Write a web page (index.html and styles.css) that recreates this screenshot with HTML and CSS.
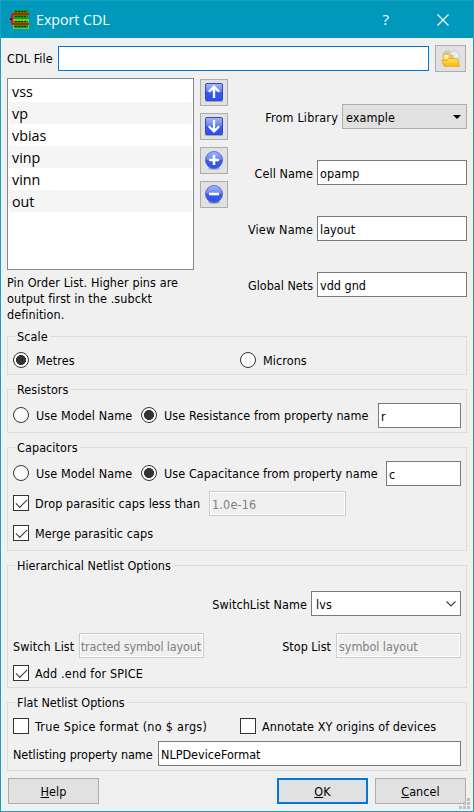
FILE: index.html
```html
<!DOCTYPE html>
<html lang="en">
<head>
<meta charset="utf-8">
<title>Export CDL</title>
<link rel="stylesheet" href="styles.css">
</head>
<body>
<svg class="defs" width="0" height="0">
  <defs>
    <linearGradient id="blue" x1="0" y1="0" x2="0" y2="1"><stop offset="0" stop-color="#a9b8fb"/><stop offset=".48" stop-color="#6580f5"/><stop offset=".52" stop-color="#3a5cf0"/><stop offset="1" stop-color="#2c50f0"/></linearGradient>
    <linearGradient id="folder" x1="0" y1="0" x2="0" y2="1"><stop offset="0" stop-color="#ffe36a"/><stop offset="1" stop-color="#fbb80c"/></linearGradient>
  </defs>
</svg>
<div class="window">
  <header class="titlebar">
    <svg class="logo" width="20" height="21" viewBox="0 0 20 21" shape-rendering="crispEdges">
      <path fill="#0aa00a" d="M4 1h14v9H4zM4 11h14v8H4z"/>
      <path fill="#5fd03c" d="M3 10h16v2H3zM3 19h16v1H3zM18 10h1v10h-1zM3 16h1v4H3z"/>
      <path stroke="#043c04" stroke-width="1" stroke-dasharray="2 1" d="M5 2.500h12M5 7.500h12M5 12.500h12M5 17.500h12"/>
      <path fill="#f00" d="M2 4h17v2H3v8h16v2H2v-1H1V5h1z"/>
      <path fill="#700" d="M0 9h2v2H0z"/>
    </svg>
    <span class="title">Export CDL</span>
    <span class="help">?</span>
    <svg class="close" width="12" height="12" viewBox="0 0 12 12"><path d="M.5.5l11 11M11.5.5l-11 11" stroke="#fff" stroke-width="1.15"/></svg>
  </header>
  <main class="content">
    <div class="file-row">
      <label class="t-file">CDL File</label>
      <div class="field focus"></div>
      <button class="tool browse"><svg width="20" height="18" viewBox="0 0 20 18"><path fill="#e8ecf5" stroke="#bcc4d4" stroke-width=".7" d="M10 1h6l2 3v11h-8z"/><path fill="#c9c9c9" d="M3 2c2-2 5-2 6-1v2H3z"/><path fill="#f5c65a" stroke="#e8a844" stroke-width=".6" d="M2 3.500h6l1 2h3v9H2z"/><path fill="#fff0b0" d="M3.500 5h4v4h-4z"/><path fill="url(#folder)" stroke="#f0a010" stroke-width=".8" d="M.6 10.500h5l2-2h9l1.700 7.800H3.400z"/></svg></button>
    </div>
    <div class="top">
      <div class="pins">
        <ul class="list"><li>vss</li><li>vp</li><li>vbias</li><li>vinp</li><li>vinn</li><li>out</li></ul>
        <p class="note">Pin Order List. Higher pins are<br>output first in the .subckt<br>definition.</p>
      </div>
      <div class="tools">
        <button class="tool"><svg width="18" height="19" viewBox="0 0 18 19"><rect x="0" y="17" width="18" height="2" rx="1" fill="#a8a8b4"/><rect x=".5" y=".5" width="17" height="17" rx="1.500" fill="url(#blue)" stroke="#3349b5"/><path d="M9 15V4M3.800 8.800L9 3.600l5.200 5.200" fill="none" stroke="#fff" stroke-width="2.300"/></svg></button>
        <button class="tool"><svg width="18" height="19" viewBox="0 0 18 19"><rect x="0" y="17" width="18" height="2" rx="1" fill="#a8a8b4"/><rect x=".5" y=".5" width="17" height="17" rx="1.500" fill="url(#blue)" stroke="#3349b5"/><path d="M9 3v11M3.800 9.200L9 14.400l5.200-5.200" fill="none" stroke="#fff" stroke-width="2.300"/></svg></button>
        <button class="tool"><svg width="18" height="19" viewBox="0 0 18 19"><ellipse cx="9" cy="17" rx="6" ry="1.800" fill="#a8a8b4"/><circle cx="9" cy="9" r="8.500" fill="url(#blue)" stroke="#4058c8" stroke-width=".8"/><path d="M9 4v10M4 9h10" stroke="#fff" stroke-width="2.600"/></svg></button>
        <button class="tool"><svg width="18" height="19" viewBox="0 0 18 19"><ellipse cx="9" cy="17" rx="6" ry="1.800" fill="#a8a8b4"/><circle cx="9" cy="9" r="8.500" fill="url(#blue)" stroke="#4058c8" stroke-width=".8"/><path d="M4 9h10" stroke="#fff" stroke-width="2.600"/></svg></button>
      </div>
      <div class="form">
        <div class="form-row"><label class="wide">From Library</label><div class="combo gray"><span>example</span><svg width="8" height="4" viewBox="0 0 8 4"><path d="M0 0h8L4 4z"/></svg></div></div>
        <div class="form-row"><label>Cell Name</label><div class="field">opamp</div></div>
        <div class="form-row"><label class="wide">View Name</label><div class="field tight">layout</div></div>
        <div class="form-row"><label class="tight">Global Nets</label><div class="field tight">vdd gnd</div></div>
      </div>
    </div>
    <fieldset class="scale">
      <legend>Scale</legend>
      <div class="row half"><div class="option"><i class="radio on"></i><span>Metres</span></div><div class="option"><i class="radio"></i><span>Microns</span></div></div>
    </fieldset>
    <fieldset class="resistors">
      <legend>Resistors</legend>
      <div class="row tall"><div class="option model"><i class="radio"></i><span>Use Model Name</span></div><div class="option"><i class="radio on"></i><span>Use Resistance from property name</span></div><div class="field r">r</div></div>
    </fieldset>
    <fieldset class="capacitors">
      <legend>Capacitors</legend>
      <div class="row tall"><div class="option model"><i class="radio"></i><span>Use Model Name</span></div><div class="option"><i class="radio on"></i><span>Use Capacitance from property name</span></div><div class="field c">c</div></div>
      <div class="row tall drop"><div class="option check"><i class="box on"></i><span>Drop parasitic caps less than</span></div><div class="field disabled wide">1.0e-16</div></div>
      <div class="row merge"><div class="option check"><i class="box on"></i><span>Merge parasitic caps</span></div></div>
    </fieldset>
    <fieldset class="hier">
      <legend class="tight">Hierarchical Netlist Options</legend>
      <div class="row tall right"><label>SwitchList Name</label><div class="combo"><span>lvs</span><svg width="10" height="6" viewBox="0 0 10 6"><path d="M.5.5L5 5 9.500.5" fill="none" stroke="#444" stroke-width="1.200"/></svg></div></div>
      <div class="row tall lists"><label>Switch List</label><div class="field disabled clip">tracted symbol layout</div><label class="stop tight">Stop List</label><div class="field disabled tighter">symbol layout</div></div>
      <div class="row end"><div class="option check"><i class="box on"></i><span class="wide">Add .end for SPICE</span></div></div>
    </fieldset>
    <fieldset class="flat">
      <legend class="tight">Flat Netlist Options</legend>
      <div class="row half"><div class="option check"><i class="box"></i><span class="wider">True Spice format (no $ args)</span></div><div class="option check"><i class="box"></i><span>Annotate XY origins of devices</span></div></div>
      <div class="row tall prop"><label class="tighter">Netlisting property name</label><div class="field tight">NLPDeviceFormat</div></div>
    </fieldset>
    <footer class="actions">
      <button class="push"><span><u>H</u>elp</span></button>
      <button class="push default"><span><u>O</u>K</span></button>
      <button class="push"><span><u>C</u>ancel</span></button>
    </footer>
  </main>
  <svg class="grip" width="11" height="11" viewBox="0 0 11 11" fill="#bfbfbf"><path d="M8 0h3v3H8zM4 4h3v3H4zM8 4h3v3H8zM0 8h3v3H0zM4 8h3v3H4zM8 8h3v3H8z"/></svg>
</div>
</body>
</html>
```
FILE: styles.css
```css
* { box-sizing: border-box; }
body { margin: 0; font: 12.5px/16px "DejaVu Sans Condensed", "DejaVu Sans", sans-serif; font-stretch: condensed; letter-spacing: .08px; color: #000; }
.tighter { letter-spacing: -.05px; }
.tight { letter-spacing: 0; }
.wide { letter-spacing: .18px; }
.wider { letter-spacing: .29px; }
.defs { position: absolute; }
svg { display: block; flex: none; }
.window { position: relative; width: 474px; height: 812px; background: #f0f0f0; border: 1px solid #18a0c0; display: flex; flex-direction: column; overflow: hidden; }
.titlebar { height: 37px; flex: none; background: #0099bc; color: #fff; display: flex; align-items: center; padding: 0 24px 0 9px; font-family: "Open Sans", sans-serif; font-stretch: normal; }
.title { font-size: 14.2px; margin-left: 6px; letter-spacing: 0; }
.help { font-size: 15px; margin-left: auto; margin-right: 48px; position: relative; top: -1px; }
.content { padding: 7px 6px 0; display: flex; flex-direction: column; white-space: nowrap; }
.file-row { display: flex; align-items: center; height: 27px; }
.file-row label { width: 51px; padding-top: 1px; }
.field { height: 25px; background: #fff; border: 1px solid #7a7a7a; padding: 5px 2px 0; line-height: 16px; }
.file-row .field { width: 371px; margin-right: 6px; }
.field.focus { border-color: #0078d7; }
.field.disabled { background: #f0f0f0; border-color: #ccc; box-shadow: inset 0 0 0 1px #fff; color: #808080; }
button { font: inherit; letter-spacing: inherit; color: inherit; border: 1px solid #adadad; background: #e1e1e1; padding: 0; display: flex; align-items: center; justify-content: center; }
.tool { width: 28px; height: 27px; }
.browse { width: 31px; }
.top { display: flex; height: 251px; margin-top: 6px; }
.pins { width: 187px; margin-right: 6px; }
.list { margin: 0; list-style: none; height: 192px; border: 1px solid #828790; background: #fff; padding: 1px; font: 14.3px/22px "Open Sans", sans-serif; font-stretch: normal; letter-spacing: 0; }
.list li { height: 22px; padding: 1px 0 0 3px; }
.list li:nth-child(even) { background: #f5f5f5; }
.note { margin: 5px 0 0; line-height: 16px; }
.tools { display: flex; flex-direction: column; gap: 7px; padding-top: 1px; }
.form { flex: 1; display: flex; flex-direction: column; gap: 31px; padding-top: 26px; }
.form-row { display: flex; justify-content: flex-end; gap: 4px; height: 25px; }
.form-row label { padding-top: 6px; }
.form-row .field { width: 150px; }
.combo { width: 150px; height: 25px; border: 1px solid #7a7a7a; background: #fff; display: flex; align-items: center; justify-content: space-between; padding: 2px 4px 0; }
.combo.gray { width: 125px; background: #e1e1e1; border-color: #adadad; padding: 2px 5px 0 3px; }
.combo svg { position: relative; top: -1px; }
fieldset { margin: 0 0 7px; padding: 0 5px; border: 1px solid #dcdcdc; min-width: 0; }
legend { height: 15px; line-height: 15px; padding: 0 2px; margin-left: 2px; }
.scale { height: 46px; }
.resistors { height: 51px; }
.capacitors { height: 111px; }
.hier { height: 130px; }
.flat { height: 76px; }
.row { display: flex; }
.option { display: flex; height: 16px; gap: 7px; }
.option span { padding-top: 1px; }
.check { gap: 6px; }
.half { padding-top: 8px; }
.half .option { width: 227px; flex: none; }
.half .option:last-child { width: 221px; }
.tall { height: 25px; }
.tall .option { margin-top: 4px; }
.tall label { padding-top: 6px; }
.resistors .tall, .capacitors .tall:nth-child(2) { margin-top: 6px; }
.model { width: 128px; flex: none; }
.field.r { width: 83px; margin-left: auto; }
.field.c { width: 75px; margin-left: auto; }
.capacitors .drop { margin-top: 5px; }
.drop .check { width: 196px; }
.drop .field { width: 137px; }
.merge { margin-top: 9px; }
.right { justify-content: flex-end; margin-top: 18px; gap: 4px; }
.lists { margin-top: 17px; }
.lists label:first-child { width: 66px; }
.lists .field { width: 125px; }
.lists .clip { overflow: hidden; display: flex; justify-content: flex-end; padding-left: 0; padding-right: 2px; letter-spacing: -.15px; }
.lists .stop { margin-left: auto; margin-right: 5px; }
.end { margin-top: 7px; }
.prop { margin-top: 7px; }
.prop label { width: 145px; }
.prop .field { width: 303px; }
.radio, .box { width: 16px; height: 16px; border: 1px solid #333; background: #fff; flex: none; }
.radio { border-radius: 50%; }
.radio.on { background: radial-gradient(circle, #333 4.700px, #fff 5.300px); }
.box.on::after { content: ""; display: block; width: 10px; height: 5px; margin: 3px 0 0 2px; border: solid #333; border-width: 0 0 1.500px 1.500px; transform: rotate(-45deg); }
.actions { display: flex; padding: 0 1px; gap: 7px; }
.push { width: 91px; height: 26px; padding-top: 2px; }
.push:first-child { margin-right: auto; }
.default { border: 2px solid #0078d7; }
.grip { position: absolute; right: 3px; bottom: 2px; }
```
